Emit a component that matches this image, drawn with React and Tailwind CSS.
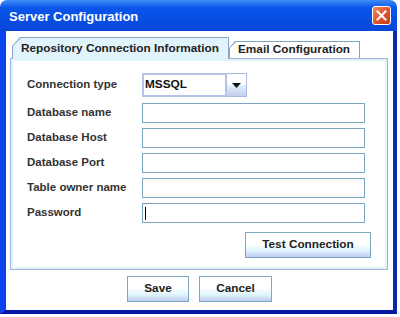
import React from "react";

const font = "font-['Liberation_Sans',Arial,sans-serif]";

function Field({ caret }) {
  return (
    <div className="w-[223px] h-[20px] border border-[#7ba6c1] bg-white flex items-center pl-[2px]">
      {caret && <div className="w-[1px] h-[13px] bg-black" />}
    </div>
  );
}

function Btn({ children, w }) {
  return (
    <div
      className={`${w} h-[26px] border border-[#7ea7c2] bg-gradient-to-b from-white from-[45%] via-[#dcf5fb] via-[75%] to-[#c6c9f0] flex items-center justify-center text-[11.8px] font-bold text-[#222]`}
    >
      {children}
    </div>
  );
}

function Row({ label, children }) {
  return (
    <div className="flex items-center">
      <div className="w-[115px] text-[11.5px] font-bold text-[#333]">{label}</div>
      {children}
    </div>
  );
}

export default function App() {
  return (
    <div className={`w-[400px] h-[317px] bg-white ${font}`}>
      <div className="w-[397px] h-[314px] flex flex-col rounded-t-[7px] overflow-hidden">
        <div className="h-[31px] shrink-0 flex items-center pl-[9px] pr-[6px] bg-gradient-to-b from-[#3f8cf8] from-[0%] via-[#0a55ea] via-[25%] to-[#0846da]">
          <span className="text-white font-bold text-[13px] leading-none mt-[1px]">Server Configuration</span>
          <div className="ml-auto w-[19px] h-[19px] rounded-[3px] border border-white bg-gradient-to-br from-[#f08a60] via-[#e0542c] to-[#c63a16] flex items-center justify-center">
            <svg width="11" height="11" viewBox="0 0 11 11">
              <path d="M1.5 1.5 L9.5 9.5 M9.5 1.5 L1.5 9.5" stroke="white" strokeWidth="2" strokeLinecap="square" />
            </svg>
          </div>
        </div>
        <div className="flex-1 flex flex-col bg-white border-l-[6px] border-r-[4px] border-b-[4px] border-l-[#0b44ec] border-r-[#0828b0] border-b-[#0816a4]">
          <div className="pl-[4px] pr-[5px] pt-[6px]">
            <div className="flex items-end h-[21px]">
              <div className="relative z-10 w-[217px] h-[22px] mb-[-1px] ml-[2px] bg-[#8fa3c9] pt-[1px] px-[1px] [clip-path:polygon(8px_0,100%_0,100%_100%,0_100%,0_9px)]">
                <div className="w-full h-full bg-[#e2f4fb] [clip-path:polygon(8px_0,100%_0,100%_100%,0_100%,0_8px)] flex items-center pl-[8px] text-[11.8px] font-bold text-[#222]">
                  Repository Connection Information
                </div>
              </div>
              <div className="w-[131px] h-[17px] bg-[#7ea6bf] pt-[1px] px-[1px] [clip-path:polygon(6px_0,100%_0,100%_100%,0_100%,0_7px)]">
                <div className="w-full h-full bg-white [clip-path:polygon(6px_0,100%_0,100%_100%,0_100%,0_6px)] flex items-center pl-[8px] text-[11.8px] font-bold text-[#222]">
                  Email Configuration
                </div>
              </div>
            </div>
            <div className="w-[378px] h-[212px] border border-[#a4b3dc] bg-[#e2f4fb] p-[2px]">
              <div className="w-full h-full bg-white flex flex-col pl-[14px] pt-[12px]">
                <Row label="Connection type">
                  <div className="flex h-[24px]">
                    <div className="w-[85px] h-full border-2 border-[#b7c2ea] bg-white flex items-center pl-[1px] text-[11.8px] font-bold text-[#111]">
                      MSSQL
                    </div>
                    <div className="w-[20px] h-full border border-[#a9b7e2] border-l-0 bg-gradient-to-b from-white from-[50%] via-[#dcf5fb] to-[#c8ccf0] flex items-center justify-center">
                      <svg width="9" height="5" viewBox="0 0 9 5">
                        <path d="M0 0 H9 L4.5 5 Z" fill="#111" />
                      </svg>
                    </div>
                  </div>
                </Row>
                <div className="flex flex-col gap-[5px] mt-[6px]">
                  <Row label="Database name"><Field /></Row>
                  <Row label="Database Host"><Field /></Row>
                  <Row label="Database Port"><Field /></Row>
                  <Row label="Table owner name"><Field /></Row>
                  <Row label="Password"><Field caret /></Row>
                </div>
                <div className="flex justify-end mt-[9px] pr-[14px]">
                  <Btn w="w-[126px]">Test Connection</Btn>
                </div>
              </div>
            </div>
          </div>
          <div className="flex justify-center gap-[10px] mt-[6px]">
            <Btn w="w-[62px]">Save</Btn>
            <Btn w="w-[73px]">Cancel</Btn>
          </div>
        </div>
      </div>
    </div>
  );
}
